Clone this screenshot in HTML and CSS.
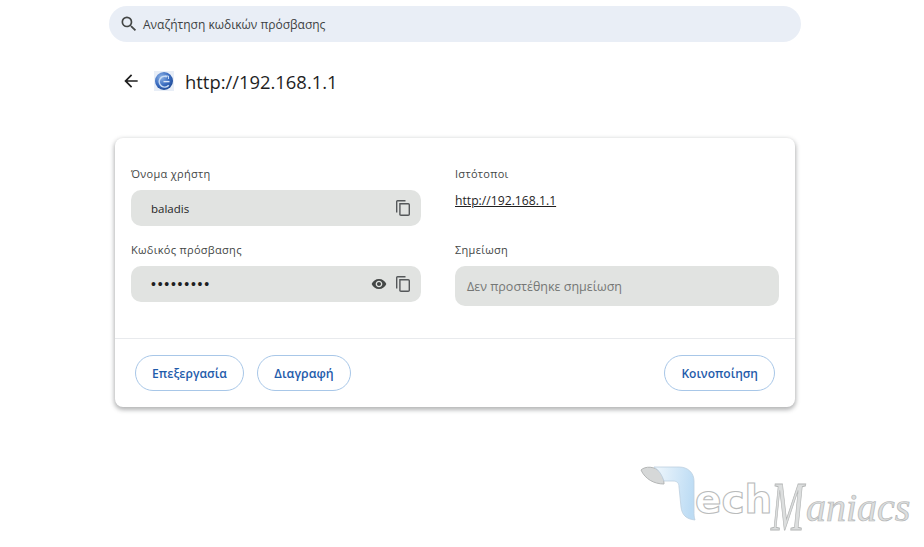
FILE: index.html
```html
<!DOCTYPE html>
<html lang="el">
<head>
<meta charset="utf-8">
<title>Κωδικοί πρόσβασης</title>
<link rel="stylesheet" href="styles.css">
</head>
<body>
<main class="page">
  <div class="search">
    <svg class="search-icon" viewBox="0 0 24 24"><path d="M15.5 14h-.79l-.28-.27A6.47 6.47 0 0 0 16 9.5 6.5 6.5 0 1 0 9.5 16c1.61 0 3.09-.59 4.23-1.57l.27.28v.79l5 4.99L20.49 19l-4.99-5zm-6 0C7.01 14 5 11.99 5 9.5S7.01 5 9.5 5 14 7.01 14 9.5 11.99 14 9.5 14z"/></svg>
    <span class="search-text">Αναζήτηση κωδικών πρόσβασης</span>
  </div>
  <header class="site-head">
    <svg class="back" viewBox="0 0 24 24"><path d="M20 11H7.83l5.59-5.59L12 4l-8 8 8 8 1.41-1.41L7.83 13H20v-2z"/></svg>
    <svg class="favicon" viewBox="0 0 20 20">
      <defs>
        <radialGradient id="globe" cx="0.35" cy="0.3" r="0.8">
          <stop offset="0" stop-color="#8fb4e6"/>
          <stop offset="0.55" stop-color="#3a6cc0"/>
          <stop offset="1" stop-color="#1c4690"/>
        </radialGradient>
      </defs>
      <rect width="20" height="20" fill="#e8eef7"/>
      <circle cx="10" cy="10" r="9" fill="url(#globe)"/>
      <path d="M14.8 14.2A5.4 5.4 0 1 1 13 5.8" fill="none" stroke="#c9dcf4" stroke-width="1.5"/>
      <path d="M9.5 10.6h6" stroke="#dce8f8" stroke-width="1.4"/>
      <path d="M11 5h3.5v3" fill="none" stroke="#c9dcf4" stroke-width="1"/>
    </svg>
    <h1 class="site-title">http://192.168.1.1</h1>
  </header>
  <section class="card">
    <div class="fields">
      <div class="col col-left">
        <div class="label">Όνομα χρήστη</div>
        <div class="field">
          <span class="value">baladis</span>
          <span class="icons">
            <svg class="icon-copy" viewBox="0 0 14 16"><path d="M.7 12.5V1.5q0-.8.8-.8H9.5M4 3.7h8.2q1.1 0 1.1 1.1v9.4q0 1.1-1.1 1.1H5q-1.1 0-1.1-1.1V3.7z"/></svg>
          </span>
        </div>
        <div class="label label-next">Κωδικός πρόσβασης</div>
        <div class="field">
          <span class="value dots">•••••••••</span>
          <span class="icons">
            <svg class="icon-eye" viewBox="0 0 24 24"><path d="M12 4.5C7 4.5 2.73 7.61 1 12c1.73 4.39 6 7.5 11 7.5s9.27-3.11 11-7.5c-1.73-4.39-6-7.5-11-7.5zM12 17c-2.76 0-5-2.24-5-5s2.24-5 5-5 5 2.24 5 5-2.24 5-5 5zm0-8c-1.66 0-3 1.34-3 3s1.34 3 3 3 3-1.34 3-3-1.34-3-3-3z"/></svg>
            <svg class="icon-copy" viewBox="0 0 14 16"><path d="M.7 12.5V1.5q0-.8.8-.8H9.5M4 3.7h8.2q1.1 0 1.1 1.1v9.4q0 1.1-1.1 1.1H5q-1.1 0-1.1-1.1V3.7z"/></svg>
          </span>
        </div>
      </div>
      <div class="col col-right">
        <div class="label">Ιστότοποι</div>
        <a class="link" href="#">http://192.168.1.1</a>
        <div class="label label-note">Σημείωση</div>
        <div class="field note"><span class="placeholder">Δεν προστέθηκε σημείωση</span></div>
      </div>
    </div>
    <footer class="actions">
      <button class="btn btn-edit" type="button">Επεξεργασία</button>
      <button class="btn btn-delete" type="button">Διαγραφή</button>
      <button class="btn btn-share" type="button">Κοινοποίηση</button>
    </footer>
  </section>
</main>
<div class="watermark">
  <svg class="wm-t" viewBox="0 0 60 62">
    <defs>
      <linearGradient id="wmblue" x1="0" y1="0" x2="1" y2="0.15">
        <stop offset="0" stop-color="#f0f7fc"/>
        <stop offset="1" stop-color="#bddcf4"/>
      </linearGradient>
    </defs>
    <path d="M1 5C5 1 15 1 20 7C23 11 24 15 24 19C14 19 5 14 1 5Z" fill="#d6d8d8" stroke="#b4b6b6"/>
    <path d="M14 2H39C48 2 54 8 54 16V46C54 50 54 52 55 55C46 54 42 50 41 42L39 22C39 18 37 16 33 16H24C22 10 19 5 14 2Z" fill="url(#wmblue)" stroke="#bccfdf" stroke-width="0.8"/>
  </svg>
  <span class="wm-ech">ech</span>
  <span class="wm-m">M</span>
  <span class="wm-rest">aniacs</span>
</div>
</body>
</html>
```
FILE: styles.css
```css
html, body { margin: 0; padding: 0; background: #fff; }
body {
  width: 924px;
  height: 547px;
  overflow: hidden;
  position: relative;
  font-family: "Open Sans", "Noto Sans", sans-serif;
  color: #1f1f1f;
}
.page { width: 692px; margin-left: 109px; padding-top: 6px; }

.search {
  height: 36px;
  border-radius: 18px;
  background: #e9eef6;
  display: flex;
  align-items: center;
  padding-left: 10px;
}
.search-icon { width: 20px; height: 20px; fill: #444746; }
.search-text { margin-left: 4px; font-size: 12px; color: #3c3f42; }

.site-head {
  display: flex;
  align-items: center;
  height: 40px;
  margin-top: 19px;
  padding-left: 12px;
}
.back { width: 20px; height: 20px; fill: #1f1f1f; }
.favicon { width: 20px; height: 20px; margin-left: 13px; }
.site-title { margin: 0 0 0 11px; font-size: 18.4px; font-weight: 400; color: #1f1f1f; }

.card {
  margin: 37px 6px 0;
  height: 269px;
  box-sizing: border-box;
  border-radius: 8px;
  background: #fff;
  box-shadow: 0 2px 4px 1px rgba(60, 64, 67, 0.38);
  display: flex;
  flex-direction: column;
}
.fields {
  height: 201px;
  box-sizing: border-box;
  border-bottom: 1px solid #e8eaed;
  padding: 28px 16px 0;
  display: grid;
  grid-template-columns: 290px 324px;
  column-gap: 34px;
}
.col { display: flex; flex-direction: column; }
.label { font-size: 11px; line-height: 16px; color: #444746; letter-spacing: 0.3px; }
.label-next { margin-top: 16px; }
.label-note { margin-top: 32px; }
.field {
  height: 36px;
  margin-top: 8px;
  border-radius: 10px;
  background: #e1e3e1;
  display: flex;
  align-items: center;
  justify-content: space-between;
  padding: 0 11px 0 20px;
}
.value { font-size: 11.5px; color: #1f1f1f; }
.dots { font-size: 14px; letter-spacing: 1.75px; font-family: "Liberation Sans", sans-serif; }
.icons { display: flex; align-items: center; gap: 9px; }
.icon-copy { width: 14px; height: 16px; fill: none; stroke: #55585a; stroke-width: 1.4; display: block; }
.icon-eye { width: 16px; height: 16px; fill: #444746; display: block; }
.link {
  margin-top: 10px;
  font-size: 12.2px;
  line-height: 18px;
  color: #1f1f1f;
  text-decoration: underline;
}
.note { height: 40px; padding-left: 12px; }
.placeholder { font-size: 12.5px; color: #757775; }

.actions {
  flex: 1;
  display: flex;
  align-items: center;
  gap: 13px;
  padding: 0 20px;
}
.btn {
  height: 36px;
  padding: 0 16px;
  border: 1px solid #a8c7e8;
  border-radius: 18px;
  background: #fff;
  font-family: inherit;
  font-size: 12px;
  font-weight: 600;
  color: #1f5cab;
}
.btn-edit { font-size: 12.1px; }
.btn-delete { padding: 0 16.5px; font-size: 12.4px; }
.btn-share { margin-left: auto; }

.watermark {
  position: absolute;
  left: 640px;
  top: 465px;
  width: 284px;
  height: 82px;
}
.wm-t { width: 60px; height: 62px; position: absolute; left: 0; top: 0; }
.wm-ech {
  position: absolute;
  left: 55px;
  top: 7px;
  font-family: "DejaVu Sans", sans-serif;
  font-weight: 700;
  font-size: 39px;
  line-height: 56px;
  color: #fff;
  -webkit-text-stroke: 1.1px #b9bbbb;
}
.wm-m, .wm-rest {
  position: absolute;
  font-family: "Liberation Serif", serif;
  font-style: italic;
  color: #dcdede;
  -webkit-text-stroke: 0.7px #b4b6b6;
}
.wm-m {
  left: 131px;
  top: 18px;
  font-size: 44px;
  line-height: 50px;
  transform: scale(0.9, 1.6);
  transform-origin: left center;
}
.wm-rest {
  left: 166px;
  top: 21px;
  font-size: 40px;
  line-height: 44px;
}
```
